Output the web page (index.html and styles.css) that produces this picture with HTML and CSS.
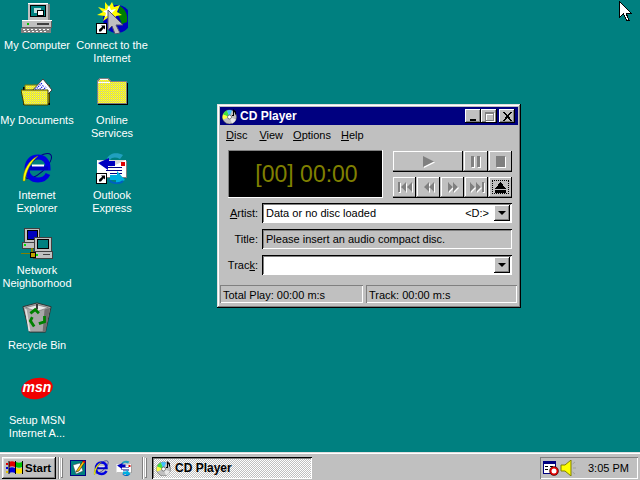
FILE: index.html
```html
<!DOCTYPE html>
<html lang="en">
<head>
    <meta charset="UTF-8">
    <title>CD Player</title>
    <link rel="stylesheet" href="styles.css">
</head>
<body>
    <svg class="defs" width="0" height="0">
        <defs>
            <pattern id="yellow-dither" width="2" height="2" patternUnits="userSpaceOnUse">
                <rect width="2" height="2" fill="#ffff00"/>
                <rect width="1" height="1" fill="#c0c0c0"/>
                <rect x="1" y="1" width="1" height="1" fill="#e8e860"/>
            </pattern>
            <symbol id="shortcut" viewBox="0 0 11 11">
                <rect width="11" height="11" fill="#000"/>
                <rect x="1" y="1" width="9" height="9" fill="#fff"/>
                <path d="M5 2.500h4v4l-1.300-1.300-2.700 3.300h-2v-2l3.200-2.700z" fill="#000"/>
            </symbol>
            <symbol id="ie" viewBox="0 0 32 32">
                <ellipse cx="17" cy="14" rx="17" ry="7" transform="rotate(-42 17 14)" fill="none" stroke="#000080" stroke-width="1"/>
                <path d="M8 16H27C27 9 23 5 17 5C10 5 6 10 6 17C6 24 11 28 17 28C22 28 25 26 27 22" fill="none" stroke="#0000e0" stroke-width="5"/>
                <path d="M7 14.500H27V18H7z" fill="#0000c0"/>
                <path d="M11 12.500H23V14.500H11z" fill="#fff"/>
                <path d="M2 29C2 18 8 8 17 4C10 10 5 19 4 29z" fill="#ffff00" stroke="#808000" stroke-width=".5"/>
            </symbol>
            <symbol id="outlook" viewBox="0 0 32 32">
                <path d="M11 7C13 1 21 0 27 3L24 7C20 5 16 5 14 8z" fill="#20a0c0"/>
                <path d="M2 9H31V26H2z" fill="#808080"/>
                <path d="M1 8H30V25H1z" fill="#fff"/>
                <path d="M1 8H30L15 15z" fill="#d8d8d8"/>
                <path d="M25 10h4v4h-4z" fill="#e00000"/>
                <path d="M10 15h16v1h-16zM10 18h16v1h-16zM14 21h12v1h-12z" fill="#000080"/>
                <path d="M2 11L13 6V9H19V14H12V18z" fill="#0000c0"/>
                <path d="M29 28L20 32V28H14V23H21V19z" fill="#00b0e0"/>
                <path d="M13 28C16 32 24 32 27 29" fill="none" stroke="#0060c0" stroke-width="2"/>
            </symbol>
            <symbol id="desktop-quick" viewBox="0 0 16 16">
                <rect width="16" height="16" fill="#000080"/>
                <rect x="1" y="1" width="14" height="14" fill="#008080"/>
                <path d="M3 5L10 3L13 11L6 14z" fill="#fff" stroke="#404040" stroke-width=".5"/>
                <path d="M7 10l6-9 2 1-6 9-3 1z" fill="#ffc000" stroke="#000" stroke-width=".5"/>
                <path d="M13.500.500l2 1-1 1.600-2-1z" fill="#e00000"/>
            </symbol>
            <symbol id="cd" viewBox="0 0 16 16">
                <circle cx="7.500" cy="9" r="7" fill="#c0c0c0" stroke="#606060" stroke-width=".6"/>
                <path d="M7.500 9L1 6.500A7 7 0 0 1 5 2.500z" fill="#40e040"/>
                <path d="M7.500 9L1 11.500A7 7 0 0 1 1 6.500z" fill="#ffff40"/>
                <path d="M7.500 9L5 2.500A7 7 0 0 1 10 2.500z" fill="#40c0ff"/>
                <path d="M7.500 9L14 11.500A7 7 0 0 1 10 15.500z" fill="#e8e8e8"/>
                <circle cx="7.500" cy="9" r="2" fill="#fff" stroke="#404040" stroke-width=".6"/>
                <path d="M11 7V1l3 2.500v3h-1v-2l-1-.8V8H10V7z" fill="#000"/>
            </symbol>
            <symbol id="glyph-play" viewBox="0 0 11 11"><path d="M0 0L11 5.500L0 11z"/></symbol>
            <symbol id="glyph-pause" viewBox="0 0 9 11"><path d="M0 0h3v11h-3zM6 0h3v11h-3z"/></symbol>
            <symbol id="glyph-stop" viewBox="0 0 9 11"><path d="M0 0h9v11h-9z"/></symbol>
            <symbol id="glyph-prev" viewBox="0 0 14 10"><path d="M0 0h2v10h-2zM8 0v10L3 5zM14 0v10L9 5z"/></symbol>
            <symbol id="glyph-rew" viewBox="0 0 10 10"><path d="M5 0v10L0 5zM10 0v10L5 5z"/></symbol>
            <symbol id="glyph-ffwd" viewBox="0 0 10 10"><path d="M0 0v10L5 5zM5 0v10L10 5z"/></symbol>
            <symbol id="glyph-next" viewBox="0 0 14 10"><path d="M0 0v10L5 5zM6 0v10L11 5zM12 0h2v10h-2z"/></symbol>
        </defs>
    </svg>

    <div class="desktop">
        <div class="icon-grid">
            <div class="desk-icon">
                <svg class="icon-img" viewBox="0 0 32 32" shape-rendering="crispEdges">
                    <path d="M7 1H27V18H7z" fill="#c0c0c0"/>
                    <path d="M27 2H29V18H27z" fill="#808080"/>
                    <path d="M7 1H27V2H7z" fill="#fff"/>
                    <path d="M9 3H25V15H9z" fill="#000"/>
                    <path d="M10 4H24V14H10z" fill="#008080"/>
                    <path d="M13 6H20V11H13z" fill="#c0e0e0"/>
                    <path d="M16 8H22V13H16z" fill="#fff" stroke="#000" stroke-width="1"/>
                    <path d="M1 18H31V26H1z" fill="#c0c0c0"/>
                    <path d="M1 18H31V19H1z" fill="#fff"/>
                    <path d="M1 25H31V26H1zM30 19H31V26H30z" fill="#606060"/>
                    <path d="M6 21H8V23H6z" fill="#00c000"/>
                    <path d="M16 21H28V23H16z" fill="#404040"/>
                    <path d="M0 26H30V31H0z" fill="#808080"/>
                    <path d="M2 27h2v1h-2zM6 27h2v1h-2zM10 27h2v1h-2zM14 27h2v1h-2zM18 27h2v1h-2zM22 27h2v1h-2zM26 27h2v1h-2zM3 29h2v1h-2zM7 29h2v1h-2zM11 29h2v1h-2zM15 29h2v1h-2zM19 29h2v1h-2zM23 29h2v1h-2z" fill="#fff"/>
                </svg>
                <span class="icon-label">My Computer</span>
            </div>
            <div class="desk-icon">
                <svg class="icon-img" viewBox="0 0 32 32">
                    <circle cx="21" cy="17" r="14" fill="#0000c0"/>
                    <path d="M24 4C29 7 32 12 31 20L26 22L22 12z" fill="#008000"/>
                    <path d="M1 13L7 10L2 5L9 7L9 0L13 5L16 0L18 5L24 3L21 10L26 13L20 14L17 20L13 15L7 19L9 14z" fill="#ffff00"/>
                    <path d="M7 9L11 8L13 3L15 8L20 7L16 11L17 16L13 13L9 15L10 11z" fill="#fff"/>
                    <path d="M12 8L27 23L20 23L24 31L19 32L16 24L12 28z" fill="#c0c0c0" stroke="#505070" stroke-width="1"/>
                    <use href="#shortcut" x="0" y="21" width="11" height="11"/>
                </svg>
                <span class="icon-label">Connect to the Internet</span>
            </div>
            <div class="desk-icon">
                <svg class="icon-img" viewBox="0 0 32 32">
                    <path d="M2 10H8V8H29V28H2z" fill="#000"/>
                    <path d="M4 8H28V26H4z" fill="url(#yellow-dither)" stroke="#808000" stroke-width="1"/>
                    <path d="M10 15L22 2L31 13L26 18z" fill="#fff" stroke="#404040" stroke-width="1"/>
                    <path d="M13 14L21 6M16 15L23 8M19 16L25 10" stroke="#0000e0" stroke-width="1.500" stroke-dasharray="1 1"/>
                    <path d="M0 13H27V28H3z" fill="url(#yellow-dither)" stroke="#404000" stroke-width="1"/>
                </svg>
                <span class="icon-label">My Documents</span>
            </div>
            <div class="desk-icon">
                <svg class="icon-img" viewBox="0 0 32 32" shape-rendering="crispEdges">
                    <path d="M2 28H32V6H30V27H2z" fill="#000"/>
                    <path d="M1 4L3 1H13L15 4H31V27H1z" fill="#808080"/>
                    <path d="M2 5L4 2H12L14 5H30V26H2z" fill="url(#yellow-dither)"/>
                    <path d="M2 5H14V6H2zM4 2H12V3H4z" fill="#fff"/>
                </svg>
                <span class="icon-label">Online Services</span>
            </div>
            <div class="desk-icon">
                <svg class="icon-img"><use href="#ie"/></svg>
                <span class="icon-label">Internet Explorer</span>
            </div>
            <div class="desk-icon">
                <svg class="icon-img" viewBox="0 0 32 32">
                    <use href="#outlook" width="32" height="32"/>
                    <use href="#shortcut" x="0" y="21" width="11" height="11"/>
                </svg>
                <span class="icon-label">Outlook Express</span>
            </div>
            <div class="desk-icon">
                <svg class="icon-img" viewBox="0 0 32 32" shape-rendering="crispEdges">
                    <path d="M3 1H18V15H3z" fill="#c0c0c0" stroke="#404040" stroke-width="1"/>
                    <path d="M6 3H16V12H6z" fill="#0000c0" stroke="#000" stroke-width="1"/>
                    <path d="M1 15H17V21H1z" fill="#c0c0c0" stroke="#404040" stroke-width="1"/>
                    <path d="M3 17H5V19H3z" fill="#00e000"/>
                    <path d="M10 21H12V27H10z" fill="#808000"/>
                    <path d="M0 26H10V27H0z" fill="#808000"/>
                    <path d="M13 10H30V24H13z" fill="#c0c0c0" stroke="#404040" stroke-width="1"/>
                    <path d="M16 12H27V21H16z" fill="#008080" stroke="#000" stroke-width="1"/>
                    <path d="M12 24H31V31H12z" fill="#c0c0c0" stroke="#404040" stroke-width="1"/>
                    <path d="M15 27H17V29H15z" fill="#00e000"/>
                    <path d="M22 27H29V28H22z" fill="#404040"/>
                    <path d="M9 25H14V30H9z" fill="#c0a000" stroke="#000" stroke-width="1"/>
                </svg>
                <span class="icon-label">Network Neighborhood</span>
            </div>
            <div class="desk-icon desk-icon-blank"></div>
            <div class="desk-icon">
                <svg class="icon-img" viewBox="0 0 32 34">
                    <path d="M1 5L16 1L31 5L25 32H8z" fill="#a8a8a8" stroke="#303030" stroke-width="1"/>
                    <path d="M4 6L16 3L28 6L16 10z" fill="#e8e8e8" stroke="#606060" stroke-width=".6"/>
                    <path d="M15 2h2v6h-2z" fill="#303030"/>
                    <path d="M24 8L30 6L25 32L22 32z" fill="#707070"/>
                    <path d="M3 7L7 31H9L5 8z" fill="#e0e0e0"/>
                    <path d="M9 12L14 8L18 12M24 15L24 21L18 23M13 26L9 20L11 16" fill="none" stroke="#008000" stroke-width="3"/>
                </svg>
                <span class="icon-label">Recycle Bin</span>
            </div>
            <div class="desk-icon desk-icon-blank"></div>
            <div class="desk-icon">
                <svg class="icon-img" viewBox="0 0 32 32">
                    <ellipse cx="16" cy="11.500" rx="16" ry="10.500" transform="rotate(-12 16 11.500)" fill="#f00000"/>
                    <text class="msn-text" x="16" y="15" text-anchor="middle">msn</text>
                </svg>
                <span class="icon-label">Setup MSN Internet A...</span>
            </div>
        </div>

        <div class="window">
            <div class="titlebar">
                <svg class="title-icon"><use href="#cd"/></svg>
                <span class="title-text">CD Player</span>
                <div class="title-buttons">
                    <button class="win-btn"><svg width="9" height="9"><rect x="1" y="7" width="6" height="2"/></svg></button>
                    <button class="win-btn win-btn-off"><svg width="9" height="9"><path d="M0 0h9v9h-9zM1 2v6h7v-6z" fill-rule="evenodd"/></svg></button>
                    <button class="win-btn win-btn-close"><svg width="9" height="9" shape-rendering="crispEdges"><path d="M0 0h2l2.500 3 2.500-3h2l-3.500 4 3.500 5h-2l-2.500-3.500-2.500 3.500h-2l3.500-5z"/></svg></button>
                </div>
            </div>
            <div class="menubar">
                <span class="menu-item"><u>D</u>isc</span>
                <span class="menu-item"><u>V</u>iew</span>
                <span class="menu-item"><u>O</u>ptions</span>
                <span class="menu-item"><u>H</u>elp</span>
            </div>
            <div class="player-top">
                <div class="lcd">[00] 00:00</div>
                <div class="controls">
                    <div class="control-row">
                        <button class="ctl ctl-wide"><svg class="glyph" width="11" height="11"><use href="#glyph-play"/></svg></button>
                        <button class="ctl"><svg class="glyph" width="9" height="11"><use href="#glyph-pause"/></svg></button>
                        <button class="ctl"><svg class="glyph" width="9" height="11"><use href="#glyph-stop"/></svg></button>
                    </div>
                    <div class="control-row">
                        <button class="ctl"><svg class="glyph" width="14" height="10"><use href="#glyph-prev"/></svg></button>
                        <button class="ctl"><svg class="glyph" width="10" height="10"><use href="#glyph-rew"/></svg></button>
                        <button class="ctl"><svg class="glyph" width="10" height="10"><use href="#glyph-ffwd"/></svg></button>
                        <button class="ctl"><svg class="glyph" width="14" height="10"><use href="#glyph-next"/></svg></button>
                        <button class="ctl ctl-focus">
                            <svg width="11" height="11" shape-rendering="crispEdges"><path d="M5.500 0L11 6.500H0zM0 8h11v3H0z"/></svg>
                        </button>
                    </div>
                </div>
            </div>
            <div class="form-row">
                <label class="form-label"><u>A</u>rtist:</label>
                <div class="field field-white">
                    <span class="field-text">Data or no disc loaded</span>
                    <span class="field-drive">&lt;D:&gt;</span>
                    <span class="combo-btn"><span class="combo-arrow"></span></span>
                </div>
            </div>
            <div class="form-row">
                <label class="form-label">Title:</label>
                <div class="field field-gray">
                    <span class="field-text">Please insert an audio compact disc.</span>
                </div>
            </div>
            <div class="form-row">
                <label class="form-label">Trac<u>k</u>:</label>
                <div class="field field-white">
                    <span class="field-text"></span>
                    <span class="combo-btn"><span class="combo-arrow"></span></span>
                </div>
            </div>
            <div class="statusbar">
                <div class="status-cell status-left">Total Play: 00:00 m:s</div>
                <div class="status-cell status-right">Track: 00:00 m:s</div>
            </div>
        </div>

        <svg class="mouse" width="13" height="21" viewBox="0 0 13 21" shape-rendering="crispEdges">
            <path d="M.5.500V16.500L4.500 12.500L7.500 19.500H10L7 12H12z" fill="#fff" stroke="#000" stroke-width="1"/>
        </svg>
    </div>

    <div class="taskbar">
        <button class="start-btn">
            <svg width="17" height="15" viewBox="0 0 17 15">
                <path d="M0 3h2v2h-2z" fill="#e00000"/>
                <path d="M0 7h2v2h-2z" fill="#0000e0"/>
                <path d="M0 11h2v2h-2z" fill="#e0c000"/>
                <path d="M3 2C5 1 7 1 9 2V7C7 6 5 6 3 7z" fill="#e00000"/>
                <path d="M10 2C12 3 14 3 16 2V7C14 8 12 8 10 7z" fill="#00c000"/>
                <path d="M3 8C5 7 7 7 9 8V13C7 12 5 12 3 13z" fill="#0000e0"/>
                <path d="M10 8C12 9 14 9 16 8V13C14 14 12 14 10 13z" fill="#ffe000"/>
                <path d="M9 1H10V14H9zM2.500 1H3.500V14H2.500zM16 1H17V14H16z" fill="#000"/>
            </svg>
            <span>Start</span>
        </button>
        <span class="divider"></span>
        <span class="grip"></span>
        <div class="quick-launch">
            <svg class="quick-icon"><use href="#desktop-quick"/></svg>
            <svg class="quick-icon"><use href="#ie"/></svg>
            <svg class="quick-icon"><use href="#outlook"/></svg>
        </div>
        <span class="divider"></span>
        <span class="grip"></span>
        <div class="task-btn">
            <svg class="quick-icon"><use href="#cd"/></svg>
            <span>CD Player</span>
        </div>
        <div class="tray">
            <svg class="tray-icon" viewBox="0 0 16 16" shape-rendering="crispEdges">
                <path d="M0 1H12V13H0z" fill="#fff" stroke="#000080" stroke-width="1"/>
                <path d="M1 1H12V4H1z" fill="#000080"/>
                <path d="M2 6h3v1h-3zM7 6h3v1h-3zM2 9h3v1h-3z" fill="#000"/>
                <circle cx="11" cy="11" r="4.500" fill="#e00000" stroke="#000" stroke-width=".5" shape-rendering="auto"/>
                <circle cx="11" cy="11" r="2.500" fill="#fff" shape-rendering="auto"/>
            </svg>
            <svg class="tray-icon" viewBox="0 0 16 16">
                <path d="M1 5H5L11 0V16L5 11H1z" fill="#ffff00" stroke="#808000" stroke-width="1"/>
                <path d="M13 8H16M12.500 4L15 2M12.500 12L15 14" stroke="#a0a0a0" stroke-width="1"/>
            </svg>
            <span class="clock">3:05 PM</span>
        </div>
    </div>
</body>
</html>
```

FILE: styles.css
```css
html, body {
    margin: 0;
    height: 100%;
}
body {
    width: 640px;
    height: 480px;
    overflow: hidden;
    display: flex;
    flex-direction: column;
    font-family: "Liberation Sans", Arial, sans-serif;
    font-size: 11px;
    color: #000;
    background-color: #008080;
}
button {
    font: inherit;
    padding: 0;
    border: 0;
    color: inherit;
}
.defs {
    position: absolute;
}

/* desktop */
.desktop {
    flex: 1;
    position: relative;
}
.icon-grid {
    display: grid;
    grid-template-columns: 75px 75px;
    grid-auto-rows: 75px;
}
.desk-icon {
    display: flex;
    flex-direction: column;
    align-items: center;
    padding: 2px 1px 0 0;
    box-sizing: border-box;
}
.desk-icon-blank {
    visibility: hidden;
}
.icon-img {
    display: block;
    width: 32px;
    height: 32px;
    flex: none;
}
.icon-label {
    margin-top: 5px;
    width: 74px;
    color: #fff;
    text-align: center;
    line-height: 13px;
}
.msn-text {
    font-family: "Liberation Sans", Arial, sans-serif;
    font-size: 14px;
    font-weight: bold;
    font-style: italic;
    fill: #fff;
}
.mouse {
    position: absolute;
    left: 619px;
    top: 1px;
}

/* cd player window */
.window {
    position: absolute;
    left: 217px;
    top: 104px;
    width: 304px;
    height: 204px;
    box-sizing: border-box;
    padding: 3px;
    background-color: #c0c0c0;
    box-shadow: inset -1px -1px #000, inset 1px 1px #dfdfdf, inset -2px -2px #808080, inset 2px 2px #fff;
}
.titlebar {
    height: 18px;
    display: flex;
    align-items: center;
    padding: 0 3px 0 2px;
    background-color: #000080;
    color: #fff;
}
.title-icon {
    width: 16px;
    height: 16px;
    margin-right: 2px;
}
.title-text {
    font-size: 12px;
    font-weight: bold;
}
.title-buttons {
    margin-left: auto;
    display: flex;
}
.win-btn {
    width: 16px;
    height: 14px;
    display: flex;
    align-items: center;
    justify-content: center;
    background-color: #c0c0c0;
    color: #000;
    box-shadow: inset -1px -1px #000, inset 1px 1px #fff, inset -2px -2px #808080;
}
.win-btn svg {
    fill: currentColor;
}
.win-btn-off {
    color: #808080;
}
.win-btn-off svg {
    filter: drop-shadow(1px 1px 0 #fff);
}
.win-btn-close {
    margin-left: 2px;
}
.menubar {
    height: 20px;
    display: flex;
    align-items: center;
    padding-left: 6px;
    gap: 10px;
}
.menu-item:first-child {
    margin-right: 2px;
}
.player-top {
    display: flex;
    margin: 5px 0 0 8px;
    gap: 10px;
}
.lcd {
    width: 155px;
    height: 48px;
    box-sizing: border-box;
    display: flex;
    align-items: center;
    justify-content: center;
    padding-left: 2px;
    background-color: #000;
    color: #808000;
    font-size: 23px;
    box-shadow: inset -1px -1px #fff, inset 1px 1px #808080;
}
.controls {
    display: flex;
    flex-direction: column;
    gap: 5px;
    width: 119px;
    padding-top: 1px;
}
.control-row {
    display: flex;
    gap: 1px;
    border-bottom: 1px solid #000;
}
.ctl {
    flex: 1;
    height: 20px;
    display: flex;
    align-items: center;
    justify-content: center;
    background-color: #c0c0c0;
    box-shadow: inset -1px 0 #000, inset 0 -1px #808080, inset 1px 1px #fff;
}
.ctl-wide {
    flex: none;
    width: 70px;
}
.control-row .ctl:not(.ctl-wide) {
    min-width: 0;
}
.glyph {
    fill: #808080;
    filter: drop-shadow(1px 1px 0 #fff);
}
.ctl-focus {
    outline: 1px dotted #000;
    outline-offset: -4px;
}

/* artist, title, track rows */
.form-row {
    display: flex;
    align-items: center;
    height: 20px;
    margin-top: 6px;
}
.player-top + .form-row {
    margin-top: 5px;
}
.form-label {
    width: 38px;
    margin-right: 4px;
    text-align: right;
}
.field {
    width: 250px;
    height: 20px;
    box-sizing: border-box;
    display: flex;
    align-items: center;
    padding: 2px 2px 2px 4px;
    box-shadow: inset 1px 1px #000, inset -1px -1px #fff, inset 2px 2px #808080;
}
.field-white {
    background-color: #fff;
}
.field-gray {
    background-color: #c0c0c0;
}
.field-text {
    flex: 1;
}
.field-drive {
    margin-right: 5px;
}
.combo-btn {
    width: 16px;
    height: 16px;
    display: flex;
    align-items: center;
    justify-content: center;
    background-color: #c0c0c0;
    box-shadow: inset -1px -1px #000, inset 1px 1px #fff, inset -2px -2px #808080;
}
.combo-arrow {
    width: 0;
    height: 0;
    border-left: 4px solid transparent;
    border-right: 4px solid transparent;
    border-top: 4px solid #000;
}
.statusbar {
    display: flex;
    margin-top: 10px;
    gap: 3px;
}
.status-cell {
    height: 18px;
    box-sizing: border-box;
    display: flex;
    align-items: center;
    padding: 1px 0 0 3px;
    box-shadow: inset 1px 1px #808080, inset -1px -1px #fff;
}
.status-left {
    width: 143px;
}
.status-right {
    width: 151px;
}

/* taskbar */
.taskbar {
    height: 28px;
    box-sizing: border-box;
    display: flex;
    align-items: center;
    padding: 2px 2px 0;
    background-color: #c0c0c0;
    border-top: 1px solid #dfdfdf;
    box-shadow: inset 0 1px #fff;
}
.start-btn {
    width: 54px;
    height: 22px;
    display: flex;
    align-items: center;
    gap: 2px;
    padding-left: 4px;
    box-sizing: border-box;
    font-size: 11.500px;
    font-weight: bold;
    background-color: #c0c0c0;
    box-shadow: inset -1px -1px #000, inset 1px 1px #fff, inset -2px -2px #808080, inset 2px 2px #dfdfdf;
}
.divider {
    width: 1px;
    height: 22px;
    margin-left: 2px;
    background-color: #808080;
    box-shadow: 1px 0 #fff;
}
.grip {
    width: 2px;
    height: 20px;
    margin-left: 2px;
    background-color: #dfdfdf;
    box-shadow: inset -1px -1px #808080, inset 1px 1px #fff;
}
.quick-launch {
    display: flex;
    gap: 7px;
    margin: 0 8px 0 7px;
}
.quick-icon {
    display: block;
    width: 16px;
    height: 16px;
    flex: none;
}
.task-btn {
    width: 160px;
    height: 22px;
    margin-left: 5px;
    box-sizing: border-box;
    display: flex;
    align-items: center;
    gap: 3px;
    padding-left: 4px;
    font-size: 12px;
    font-weight: bold;
    background: repeating-conic-gradient(#fff 0 25%, #c0c0c0 0 50%) 0 0 / 2px 2px;
    box-shadow: inset 1px 1px #000, inset -1px -1px #fff, inset 2px 2px #808080;
}
.tray {
    width: 98px;
    height: 22px;
    margin-left: auto;
    box-sizing: border-box;
    display: flex;
    align-items: center;
    padding-left: 3px;
    box-shadow: inset 1px 1px #808080, inset -1px -1px #fff;
}
.tray-icon {
    width: 16px;
    height: 16px;
    margin-right: 1px;
}
.clock {
    margin-left: 11px;
}
```
